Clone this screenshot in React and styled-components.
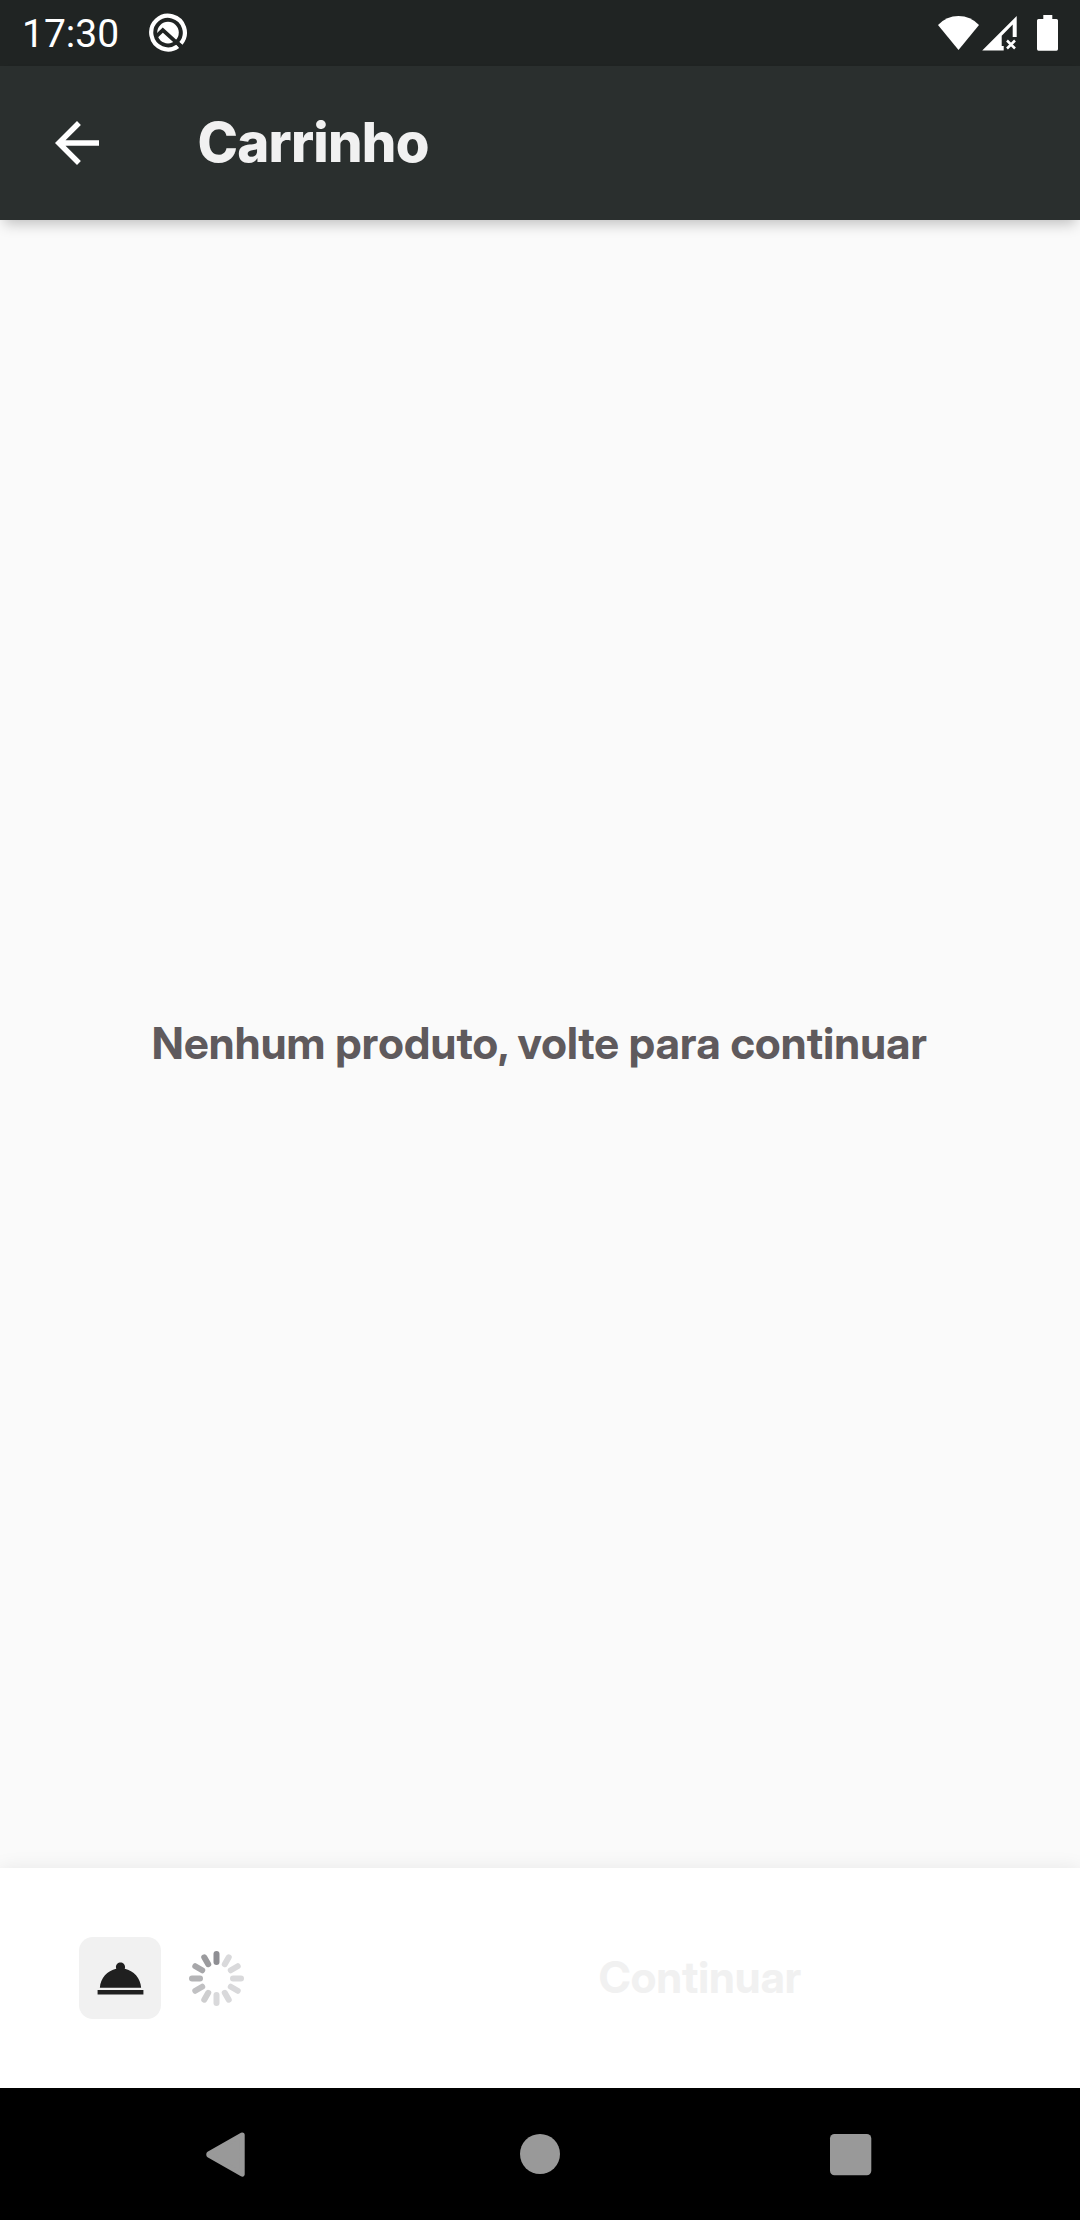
import React from "react";
import styled, { createGlobalStyle } from "styled-components";

const GlobalStyle = createGlobalStyle`
  *, *::before, *::after { box-sizing: border-box; }
  html, body { margin: 0; padding: 0; }
  body { background: #fafafa; font-family: "Inter Display", Inter, sans-serif; }
  svg { display: block; flex: none; }
`;

const Screen = styled.div`
  display: flex;
  flex-direction: column;
  width: 1080px;
  height: 2220px;
  overflow: hidden;
  background: #fafafa;
`;

const StatusBar = styled.div`
  display: flex;
  align-items: center;
  height: 66px;
  padding: 0 22px;
  background: #202423;
`;

const Clock = styled.time`
  padding-top: 3px;
  margin-right: 29px;
  color: #fff;
  font: 400 39px/45px Roboto, sans-serif;
`;

const StatusIcons = styled.div`
  display: flex;
  align-items: center;
  gap: 2px;
  margin-left: auto;
`;

const BatterySlot = styled.span`
  display: flex;
  margin-left: 17px;
`;

const Header = styled.header`
  display: flex;
  align-items: center;
  height: 154px;
  padding: 0 44px;
  background: #2a2f2e;
  box-shadow: 0 8px 13px -4px rgba(0, 0, 0, 0.23);
`;

const IconButton = styled.button`
  display: flex;
  margin: 0;
  padding: 0;
  border: 0;
  background: none;
`;

const Title = styled.h1`
  margin: 0 0 2px 87.5px;
  color: #f1f1f1;
  font-family: Inter, sans-serif;
  font-size: 54.5px;
  line-height: 66px;
  font-weight: 800;
  letter-spacing: -0.75px;
`;

const Main = styled.main`
  display: flex;
  flex: 1;
  align-items: center;
  justify-content: center;
`;

const EmptyMessage = styled.p`
  margin: 0 1px 2px 0;
  color: #5f5a5d;
  font-size: 44px;
  line-height: 54px;
  font-weight: 700;
  letter-spacing: 0.19px;
  white-space: nowrap;
`;

const Footer = styled.footer`
  display: flex;
  align-items: center;
  height: 220px;
  padding: 0 79px;
  background: #fff;
  box-shadow: 0 0 18px rgba(0, 0, 0, 0.08);
`;

const OrderBadge = styled.div`
  display: flex;
  align-items: center;
  justify-content: center;
  width: 82px;
  height: 82px;
  margin-right: 28px;
  border-radius: 14px;
  background: #f1f1f1;
`;

const ContinueButton = styled.button`
  flex: 1;
  margin: 0 0 2px 155px;
  padding: 0;
  border: 0;
  background: none;
  color: #f1f1f1;
  font-family: inherit;
  font-size: 44px;
  line-height: 54px;
  font-weight: 700;
  text-align: center;
`;

const NavBar = styled.nav`
  display: flex;
  align-items: center;
  justify-content: space-between;
  height: 132px;
  padding: 0 196px;
  background: #000;
`;

const SPOKES = [
  "#8e8e93", "#d9d9db", "#d9d9db", "#d9d9db", "#d9d9db", "#d9d9db",
  "#d9d9db", "#cececf", "#c1c1c3", "#b4b4b6", "#a7a7aa", "#9b9b9e",
];

const QIcon = () => (
  <svg width="40" height="40" viewBox="0 0 40 40">
    <path d="M29.900 33.200A16.800 16.800 0 1 1 32.900 30.400" fill="none" stroke="#fff" strokeWidth="4.200" />
    <circle cx="20" cy="19.600" r="10.800" fill="#fff" />
    <path d="M7.500 24.200 14.800 17.200 32.500 33.200" fill="none" stroke="#202423" strokeWidth="3.800" />
  </svg>
);

const WifiIcon = () => (
  <svg width="42" height="36" viewBox="0 0 42 36">
    <path d="M0 10Q8.500 1 20.500 1T41 10L20.500 35Z" fill="#fff" />
  </svg>
);

const SignalIcon = () => (
  <svg width="36" height="36" viewBox="0 0 36 36">
    <path d="M.2 35.400 34.700 1V22H30.700V9.500L19.700 20.700V31H21.700V35.400Z" fill="#fff" />
    <path d="M25 25.500l8 8M33 25.500l-8 8" stroke="#fff" strokeWidth="2.500" />
  </svg>
);

const BatteryIcon = () => (
  <svg width="21" height="36" viewBox="0 0 21 36">
    <path d="M6.300 0h9v4H19.500Q21 4 21 5.500V34Q21 35.700 19.500 35.700H1.500Q0 35.700 0 34V5.500Q0 4 1.500 4H6.300Z" fill="#fff" />
  </svg>
);

const BackArrow = () => (
  <svg width="66" height="66" viewBox="0 0 24 24">
    <path d="M20 11H7.830l5.590-5.590L12 4l-8 8 8 8 1.410-1.410L7.830 13H20v-2z" fill="#fff" />
  </svg>
);

const DishIcon = () => (
  <svg width="55" height="55" viewBox="0 0 24 24">
    <path
      d="M2 17h20v2H2zm11.840-9.210c.1-.24.160-.51.160-.79 0-1.100-.9-2-2-2s-2 .9-2 2c0 .28.060.55.160.790C6.250 8.600 3.270 11.930 3 16h18c-.27-4.070-3.250-7.400-7.160-8.210z"
      fill="#202020"
    />
  </svg>
);

const Spinner = () => (
  <svg width="55" height="55" viewBox="-27.5 -27.5 55 55">
    {SPOKES.map((color, i) => (
      <rect key={i} x="-3" y="-27.500" width="6" height="14" rx="3" fill={color} transform={`rotate(${i * 30})`} />
    ))}
  </svg>
);

const NavBack = () => (
  <svg width="60" height="60" viewBox="0 0 60 60">
    <path d="M46.200 10.900 12.800 30V31L46.200 50.200Z" fill="#999" stroke="#999" strokeWidth="5" strokeLinejoin="round" />
  </svg>
);

const NavHome = () => (
  <svg width="60" height="60" viewBox="0 0 60 60">
    <circle cx="30" cy="30" r="20" fill="#999" />
  </svg>
);

const NavRecent = () => (
  <svg width="60" height="60" viewBox="0 0 60 60">
    <rect x="6" y="10" width="41.300" height="41.300" rx="4.500" fill="#999" />
  </svg>
);

export default function App() {
  return (
    <>
      <GlobalStyle />
      <Screen>
        <StatusBar>
          <Clock>17:30</Clock>
          <QIcon />
          <StatusIcons>
            <WifiIcon />
            <SignalIcon />
            <BatterySlot><BatteryIcon /></BatterySlot>
          </StatusIcons>
        </StatusBar>
        <Header>
          <IconButton aria-label="Voltar"><BackArrow /></IconButton>
          <Title>Carrinho</Title>
        </Header>
        <Main>
          <EmptyMessage>Nenhum produto, volte para continuar</EmptyMessage>
        </Main>
        <Footer>
          <OrderBadge><DishIcon /></OrderBadge>
          <Spinner />
          <ContinueButton disabled>Continuar</ContinueButton>
        </Footer>
        <NavBar>
          <IconButton aria-label="Anterior"><NavBack /></IconButton>
          <IconButton aria-label="Tela inicial"><NavHome /></IconButton>
          <IconButton aria-label="Recentes"><NavRecent /></IconButton>
        </NavBar>
      </Screen>
    </>
  );
}
